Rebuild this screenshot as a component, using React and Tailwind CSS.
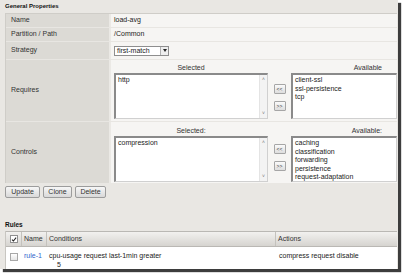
const font = "font-['Liberation_Sans',Arial,sans-serif]";

const Scrollbar = () => (
  <div className="flex w-[8px] flex-col items-center justify-between border-l border-[#e4e4e4] bg-[#f3f3f3] py-[2px] text-[5px] leading-none text-[#777]">
    <span>˄</span>
    <span>˅</span>
  </div>
);

const MoveButtons = ({ top }) => (
  <div className={`flex w-[23px] flex-col items-center gap-[7px] ${top}`}>
    {['<<', '>>'].map((t) => (
      <div
        key={t}
        className="flex h-[10px] w-[12px] items-center justify-center rounded-[1px] border border-[#a6a6a6] bg-gradient-to-b from-[#fafafa] to-[#dedede] text-[5px] leading-none text-[#333]"
      >
        {t}
      </div>
    ))}
  </div>
);

const ListBox = ({ items, className, scroll }) => (
  <div
    className={`flex border-t-2 border-l-2 border-r border-b border-t-[#8a8a8a] border-l-[#8a8a8a] border-r-[#d0d0d0] border-b-[#d0d0d0] bg-white ${className}`}
  >
    <div className="flex-1 px-[2px] pt-[1px] text-[7px] leading-[8.5px] text-[#222]">
      {items.map((i) => (
        <div key={i}>{i}</div>
      ))}
    </div>
    {scroll && <Scrollbar />}
  </div>
);

const Row = ({ label, h, children, last }) => (
  <div className={`flex ${h} ${last ? '' : 'border-b border-[#e8e6e2]'}`}>
    <div className="flex w-[105px] items-center border-r-2 border-[#ebe9e5] bg-[#dcdad5] pl-[5px] text-[7px] text-[#333]">
      {label}
    </div>
    <div className="flex-1 bg-[#f6f5f3] pl-[3px]">{children}</div>
  </div>
);

const Picker = ({ selLabel, avLabel, selected, available, btnTop, labelH }) => (
  <div className="flex h-full flex-col">
    <div className={`flex ${labelH} items-end text-[7px] leading-none text-[#333]`}>
      <div className="w-[154px] text-center">{selLabel}</div>
      <div className="w-[23px]" />
      <div className="w-[91px] text-right">{avLabel}</div>
    </div>
    <div className="mt-[2px] flex">
      <ListBox items={selected} scroll className="h-[46px] w-[154px]" />
      <MoveButtons top={btnTop} />
      <ListBox items={available} className="h-[46px] w-[106px]" />
    </div>
  </div>
);

const Btn = ({ children, w }) => (
  <div
    className={`flex h-[12px] ${w} items-center justify-center rounded-[2px] border border-[#9c9c9c] bg-gradient-to-b from-[#f7f7f7] to-[#d9d9d9] text-[7px] text-[#333]`}
  >
    {children}
  </div>
);

export default function App() {
  return (
    <div className={`h-[274px] w-[404px] bg-white ${font}`}>
      <div className="h-[269px] w-[398px] bg-[#e9e7e3] shadow-[3px_3px_1px_#3d3d3d]">
        <div className="flex h-[13px] items-center pl-[5px] text-[6px] font-bold text-[#111]">
          General Properties
        </div>

        <div className="ml-[5px] mr-[1px] border-t border-l border-[#cfcdc8]">
          <Row label="Name" h="h-[14px]">
            <div className="flex h-full items-center text-[7px] text-[#222]">load-avg</div>
          </Row>
          <Row label="Partition / Path" h="h-[14px]">
            <div className="flex h-full items-center text-[7px] text-[#222]">/Common</div>
          </Row>
          <Row label="Strategy" h="h-[18px]">
            <div className="flex h-full items-center">
              <div className="flex h-[10px] w-[55px] items-center border border-[#8e8e8e] bg-white">
                <span className="flex-1 pl-[2px] text-[7px] leading-none text-[#222]">first-match</span>
                <div className="flex h-full w-[8px] items-center justify-center border-l border-[#b0b0b0] bg-[#eeeeee]">
                  <div className="h-0 w-0 border-x-[2px] border-t-[3px] border-x-transparent border-t-[#222]" />
                </div>
              </div>
            </div>
          </Row>
          <Row label="Requires" h="h-[62px]">
            <Picker
              selLabel="Selected"
              avLabel="Available"
              selected={['http']}
              available={['client-ssl', 'ssl-persistence', 'tcp']}
              btnTop="pt-[11px]"
              labelH="h-[11px]"
            />
          </Row>
          <Row label="Controls" h="h-[61px]" last>
            <Picker
              selLabel="Selected:"
              avLabel="Available:"
              selected={['compression']}
              available={['caching', 'classification', 'forwarding', 'persistence', 'request-adaptation']}
              btnTop="pt-[8px]"
              labelH="h-[12px]"
            />
          </Row>
        </div>

        <div className="mt-[3px] flex gap-[3px] pl-[5px]">
          <Btn w="w-[35px]">Update</Btn>
          <Btn w="w-[29px]">Clone</Btn>
          <Btn w="w-[31px]">Delete</Btn>
        </div>

        <div className="mt-[21px] flex h-[11px] items-center pl-[5px] text-[6.5px] font-bold text-[#111]">
          Rules
        </div>

        <div className="ml-[5px] mr-[1px] mt-[1px] border-l border-[#c8c6c1]">
          <div className="flex h-[16px] border-b border-t border-[#bab8b4] bg-gradient-to-b from-[#f2f1ef] to-[#d6d4d0] text-[7px] text-[#333]">
            <div className="flex w-[16px] items-center justify-center border-r border-[#c4c2bd]">
              <div className="flex h-[8px] w-[8px] items-center justify-center border border-[#8f8f8f] bg-white">
                <svg viewBox="0 0 8 8" className="h-[7px] w-[7px]">
                  <path d="M1.3 4.2 L3.2 6 L6.8 1.6" fill="none" stroke="#222" strokeWidth="1.4" />
                </svg>
              </div>
            </div>
            <div className="flex w-[25px] items-center border-r border-[#c4c2bd] pl-[2px]">Name</div>
            <div className="flex w-[229px] items-center border-r border-[#c4c2bd] pl-[2px]">Conditions</div>
            <div className="flex flex-1 items-center pl-[2px]">Actions</div>
          </div>
          <div className="flex h-[22px] bg-white text-[7px] leading-[9px] text-[#222]">
            <div className="flex w-[16px] justify-center pt-[6px]">
              <div className="h-[8px] w-[8px] border border-[#a8a8a8] bg-gradient-to-b from-white to-[#e6e6e6]" />
            </div>
            <div className="w-[25px] pl-[2px] pt-[4px] text-[#3366cc]">rule-1</div>
            <div className="w-[229px] pl-[2px] pt-[4px]">
              <div>cpu-usage request last-1min greater</div>
              <div className="pl-[8px]">5</div>
            </div>
            <div className="flex-1 pl-[3px] pt-[4px]">compress request disable</div>
          </div>
        </div>
      </div>
    </div>
  );
}
